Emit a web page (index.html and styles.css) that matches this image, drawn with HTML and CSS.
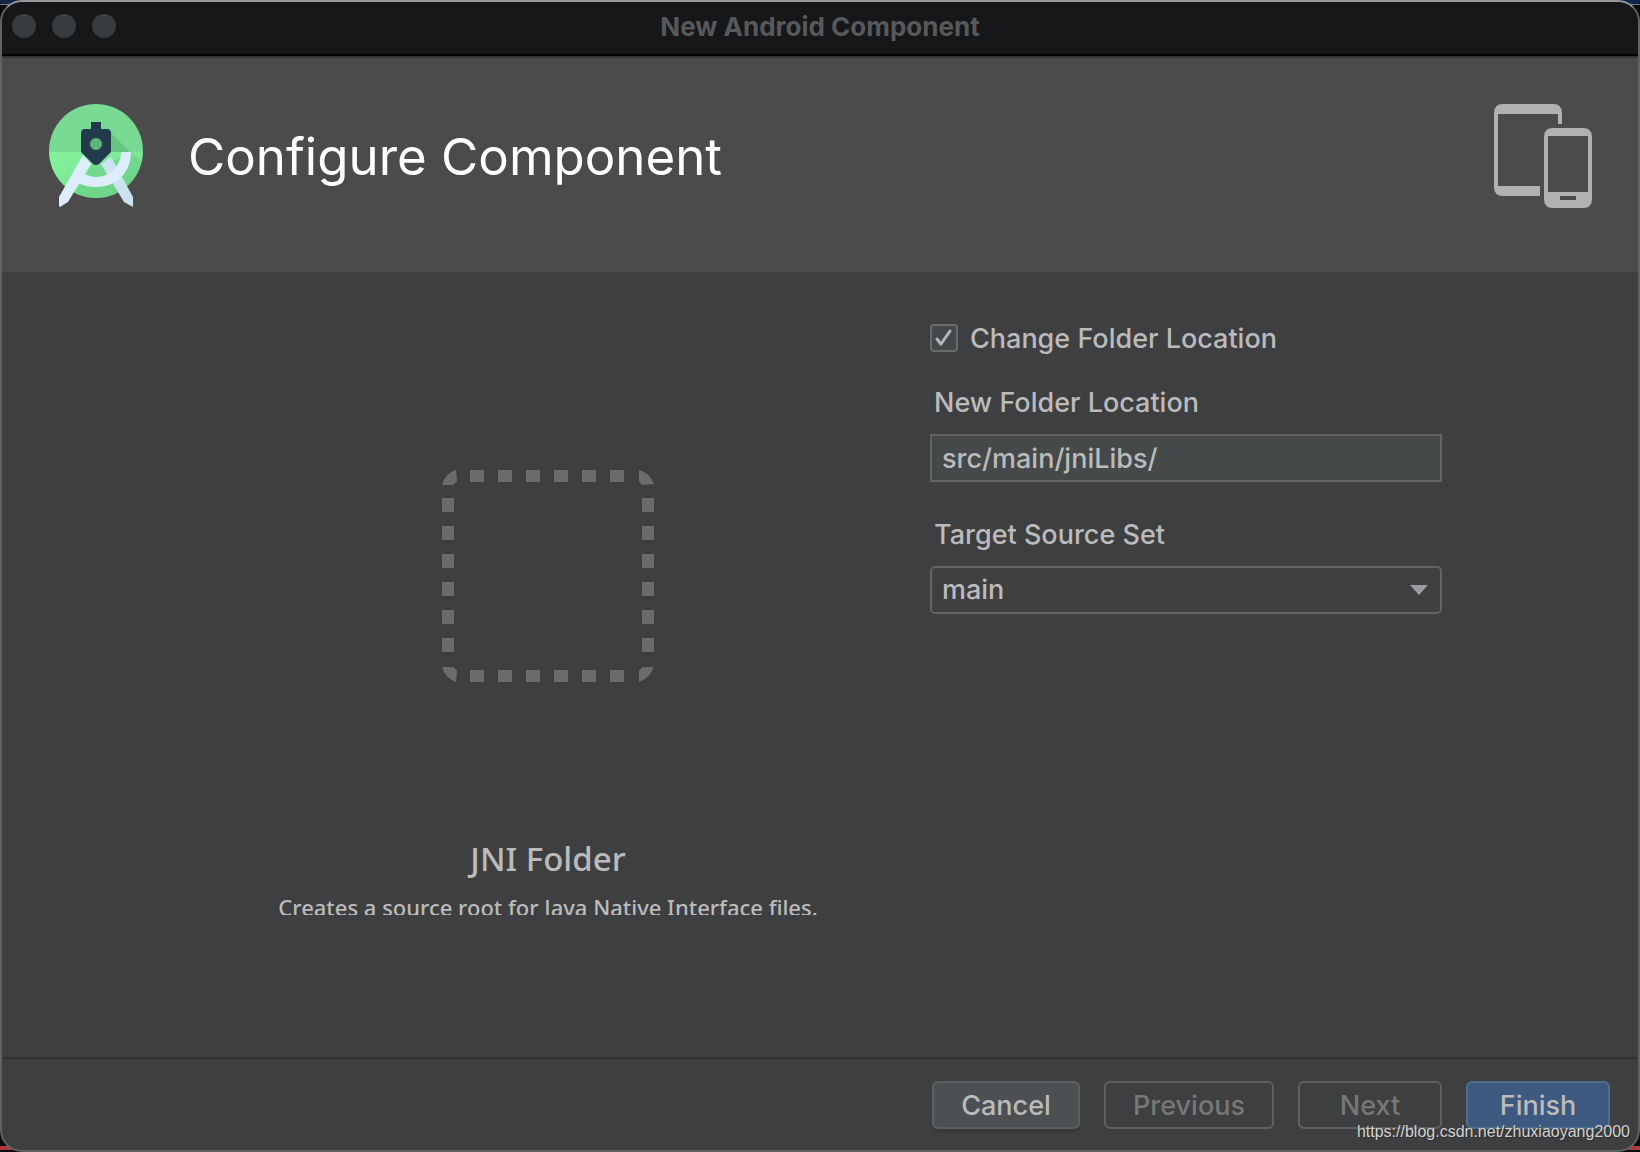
FILE: index.html
```html
<!DOCTYPE html>
<html lang="en">
<head>
<meta charset="utf-8">
<title>New Android Component</title>
<link rel="stylesheet" href="styles.css">
</head>
<body>
<div class="window">
  <header class="titlebar">
    <div class="lights"><span class="light"></span><span class="light"></span><span class="light"></span></div>
    <div class="window-title">New Android Component</div>
  </header>

  <section class="banner">
    <svg class="logo" viewBox="0 0 96 106" aria-hidden="true">
      <defs>
        <linearGradient id="low" x1="0" y1="0" x2="1" y2="1"><stop offset="0" stop-color="#85f29b"/><stop offset="1" stop-color="#74dc8e"/></linearGradient>
        <clipPath id="disc"><circle cx="48" cy="47" r="47"/></clipPath>
      </defs>
      <g clip-path="url(#disc)">
        <rect width="96" height="49" fill="#79da93"/>
        <rect y="48" width="96" height="48" fill="url(#low)"/>
        <path d="M44 60H60L83 48L96 60V96H30L24 90L33 79Z" fill="#5ab676" opacity=".3"/>
        <path d="M53 19L82 48H62V27Z" fill="#54a86e" opacity=".45"/>
        <path d="M42 34H54V46H42Z" fill="#5fb67a"/>
      </g>
      <path d="M53 60L63 53L85 93V103L76 98Z" fill="#cce2f1"/>
      <path d="M35 51L43 60L20 98L12 103L11 102V93Z" fill="#deedfc"/>
      <path d="M73 48H83C83 70 67 83 48 83C42 83 36 82 31 79L37 70C40 72 44 73 48 73C62 73 73 62 73 48Z" fill="#deedfc"/>
      <path fill-rule="evenodd" d="M43 18H53V25H59Q63 25 63 29V48L51 60Q48 62 45 60L33 48V29Q33 25 37 25H43ZM48 34A6 6 0 1 0 48 46A6 6 0 1 0 48 34Z" fill="#213b4c"/>
    </svg>
    <h1 class="heading">Configure Component</h1>
    <svg class="devices" viewBox="0 0 98 104" aria-hidden="true">
      <path fill="#afb1b3" d="M9 0H59Q68 0 68 9V20H64V10H4V82H46V92H9Q0 92 0 83V9Q0 0 9 0Z"/>
      <path fill="#afb1b3" fill-rule="evenodd" d="M59 24H89Q98 24 98 33V95Q98 104 89 104H59Q50 104 50 95V33Q50 24 59 24ZM54 32V88H94V32ZM66 92V96H82V92Z"/>
    </svg>
  </section>

  <main class="content">
    <section class="preview">
      <svg class="placeholder" viewBox="0 0 212 212" aria-hidden="true">
        <g fill="none" stroke="#6b6b6b" stroke-width="12">
          <path d="M28 6H184M28 206H184" stroke-dasharray="14 14"/>
          <path d="M6 28V184M206 28V184" stroke-dasharray="14 14"/>
        </g>
        <g fill="#6b6b6b">
          <path d="M0 15Q3 3 14 0L15 11L11 15Z"/>
          <path d="M197 0Q208 3 212 14L200 15L197 11Z"/>
          <path d="M0 197H12L15 201L14 212Q3 208 0 197Z"/>
          <path d="M212 197H200L197 201V212Q208 208 212 197Z"/>
        </g>
      </svg>
      <h2 class="name">JNI Folder</h2>
      <p class="description">Creates a source root for Java Native Interface files.</p>
    </section>

    <form class="form">
      <label class="check-row">
        <span class="check">
          <input class="check-box" type="checkbox" checked>
          <svg class="check-mark" viewBox="0 0 28 28" aria-hidden="true"><path d="M7 15L11 20L20 7" fill="none" stroke="#b4b6b8" stroke-width="3" stroke-linecap="round" stroke-linejoin="round"/></svg>
        </span>
        <span class="check-text">Change Folder Location</span>
      </label>
      <div class="field">
        <label class="field-label" for="location">New Folder Location</label>
        <input class="control" id="location" type="text" value="src/main/jniLibs/">
      </div>
      <div class="field">
        <label class="field-label" for="source-set">Target Source Set</label>
        <div class="select">
          <select class="control control-select" id="source-set"><option>main</option></select>
          <svg class="arrow" viewBox="0 0 18 10" aria-hidden="true"><path d="M0 0H18L9 10Z" fill="#9b9da0"/></svg>
        </div>
      </div>
    </form>
  </main>

  <footer class="actions">
    <button class="button button-cancel" type="button">Cancel</button>
    <button class="button button-wide" type="button" disabled>Previous</button>
    <button class="button" type="button" disabled>Next</button>
    <button class="button button-primary" type="button">Finish</button>
    <span class="watermark">https://blog.csdn.net/zhuxiaoyang2000</span>
  </footer>
</div>
</body>
</html>
```
FILE: styles.css
```css
* {
  box-sizing: border-box;
}

body {
  margin: 0;
  min-height: 100vh;
  display: flex;
  background: linear-gradient(#10254c 4px, #75787c 4px, #75787c 5px, #0b0b0c 5px, #0b0b0c calc(100% - 6px), #b03a40 calc(100% - 6px), #b03a40 calc(100% - 2px), #0b0b0c calc(100% - 2px));
  color: #bbbbbb;
  font-family: Inter, "Liberation Sans", sans-serif;
  font-size: 27px;
  font-weight: 500;
  line-height: 32px;
}

.window {
  flex: 1;
  display: flex;
  flex-direction: column;
  overflow: hidden;
  border: 2px solid #616263;
  border-top-color: #97999b;
  border-radius: 22px;
  background: #3e3f41;
}

.titlebar {
  display: grid;
  grid-template-columns: 1fr auto 1fr;
  align-items: center;
  height: 54px;
  padding: 0 10px 4px;
  border-bottom: 2px solid #000000;
  background: #161719;
}

.lights {
  display: flex;
  gap: 16px;
}

.light {
  width: 24px;
  height: 24px;
  border-radius: 50%;
  background: #393c3e;
}

.window-title {
  padding-top: 2px;
  color: #58595b;
  font-size: 26px;
  font-weight: 700;
}

.banner {
  display: flex;
  align-items: flex-start;
  height: 216px;
  padding: 46px 46px 0;
  border-top: 2px solid #353535;
  background: #4b4b4b;
}

.logo {
  width: 96px;
  height: 106px;
}

.heading {
  flex: 1;
  margin: 23px 0 0 44px;
  color: #ffffff;
  font-size: 51px;
  font-weight: 400;
  line-height: 60px;
}

.devices {
  width: 98px;
  height: 104px;
}

.content {
  flex: 1;
  display: grid;
  grid-template-columns: 1fr 512px;
  padding: 50px 196px 0 164px;
}

.preview {
  display: flex;
  flex-direction: column;
  align-items: center;
  padding-top: 148px;
}

.placeholder {
  width: 212px;
  height: 212px;
}

.name {
  margin: 155px 0 0;
  font-family: "Noto Sans", "Open Sans", sans-serif;
  font-size: 33px;
  font-weight: 500;
  line-height: 44px;
}

.description {
  height: 24px;
  margin: 10px 0 0;
  overflow: hidden;
  font-family: "Noto Sans", "Open Sans", sans-serif;
  font-size: 22px;
  font-weight: 500;
  line-height: 32px;
}

.check-row {
  display: flex;
  align-items: center;
  gap: 12px;
  height: 32px;
}

.check {
  display: grid;
}

.check-box,
.check-mark {
  grid-area: 1 / 1;
  width: 28px;
  height: 28px;
  margin: 0;
}

.check-box {
  appearance: none;
  border: 2px solid #6b6b6b;
  border-radius: 4px;
  background: #43494a;
}

.check-mark {
  pointer-events: none;
}

.check-text {
  padding-top: 2px;
}

.field {
  padding-top: 32px;
}

.field-label {
  display: block;
  padding: 1px 4px 15px;
}

.control {
  display: block;
  width: 100%;
  height: 48px;
  margin: 0;
  padding: 0 10px;
  border: 2px solid #646464;
  border-radius: 0;
  background: #45494a;
  color: inherit;
  font: inherit;
}

.field + .field {
  padding-top: 36px;
}

.select {
  display: grid;
  align-items: center;
}

.control-select {
  grid-area: 1 / 1;
  appearance: none;
  border-radius: 5px;
  background: #3e3f41;
}

.arrow {
  grid-area: 1 / 1;
  justify-self: end;
  width: 18px;
  height: 10px;
  margin-right: 14px;
  pointer-events: none;
}

.actions {
  position: relative;
  display: flex;
  justify-content: flex-end;
  gap: 24px;
  padding: 22px 28px 21px;
  border-top: 2px solid #313233;
}

.button {
  width: 144px;
  height: 48px;
  padding: 2px 0 0;
  border: 2px solid #5e6060;
  border-radius: 6px;
  background: transparent;
  color: #bbbbbb;
  font: inherit;
}

.button:disabled {
  color: #777777;
}

.button-cancel {
  width: 148px;
  background: #4c5052;
  box-shadow: 0 4px 0 #38393b;
}

.button-wide {
  width: 170px;
}

.button-primary {
  border-color: #4c708c;
  background: #3e597f;
}

.watermark {
  position: absolute;
  right: 8px;
  bottom: 8px;
  color: #d2d2d2;
  font-family: "Liberation Sans", sans-serif;
  font-size: 16px;
  font-weight: 400;
  line-height: 20px;
  text-shadow: 1px 1px 1px #2b2b2b;
}
```
